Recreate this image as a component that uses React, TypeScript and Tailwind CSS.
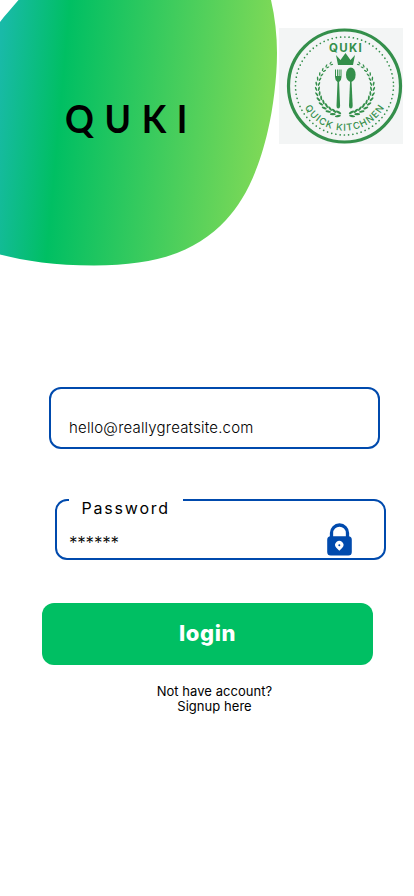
const GREEN = "#348f4b";

function Blob() {
  return (
    <svg className="absolute left-0 top-0" width="280" height="270" viewBox="0 0 280 270" aria-hidden="true">
      <defs>
        <linearGradient id="blob" gradientUnits="userSpaceOnUse" x1="0" y1="50" x2="271" y2="75">
          <stop offset="0" stopColor="#19baa8" />
          <stop offset="0.24" stopColor="#00bf63" />
          <stop offset="1" stopColor="#7ed957" />
        </linearGradient>
      </defs>
      <path
        fill="url(#blob)"
        d="M18.500 0H271C275 17 277 36 277 53C277 78 273 109 268 130C258 174 243 202 226 220C198 250 160 265.500 94 265.500C55 265.500 25 261 0 254.500V22C5 15 12 8 18.500 0Z"
      />
    </svg>
  );
}

function Laurel() {
  const leaves = Array.from({ length: 14 }, (_, i) => {
    const t = i / 13;
    const angle = 101 + t * 137;
    const a = (angle * Math.PI) / 180;
    return { angle, x: 27.5 * Math.cos(a), y: 27.5 * Math.sin(a), s: 1.05 - t * 0.5 };
  });
  return (
    <g fill={GREEN}>
      {leaves.map((l, i) => (
        <g key={i} transform={`translate(${l.x} ${l.y}) rotate(${l.angle + 90}) scale(${l.s})`}>
          <ellipse cx="1.5" cy="-1.8" rx="2.9" ry="1.1" transform="rotate(-20 1.5 -1.8)" />
          <ellipse cx="1.5" cy="1.8" rx="2.9" ry="1.1" transform="rotate(20 1.5 1.8)" />
        </g>
      ))}
    </g>
  );
}

function Logo() {
  return (
    <svg className="mt-7 mr-[11.500px] h-[116px] w-[124px] shrink-0 bg-[#f3f5f5]" viewBox="278.500 28 124 116">
      <circle cx="344" cy="86" r="56" fill="none" stroke={GREEN} strokeWidth="3.2" />
      <circle cx="344" cy="86" r="49" fill="none" stroke={GREEN} strokeWidth="1.7" strokeLinecap="round" strokeDasharray="0.01 4.266" />
      <text x="328.500" y="52.200" textLength="32.800" fill={GREEN} fontSize="11.500" fontWeight="700" fontFamily="Inter, sans-serif">QUKI</text>
      <path d="M335.500 55L340 60L345 53L350 60L354.500 55L352.500 65H337.500Z" fill={GREEN} />
      <g transform="translate(344.500 87.500)">
        <Laurel />
        <g transform="scale(-1 1)"><Laurel /></g>
      </g>
      <g fill={GREEN}>
        <path d="M334.500 69.500H335.500V76H336.500V69.500H337.400V76H338.200V69.500H339.100V76H340V69.500H341V77Q341 80.500 338.600 82L339.600 106Q339.500 108.500 337.800 108.500Q336 108.500 336 106L337 82Q334.500 80.500 334.500 77Z" />
        <ellipse cx="350.300" cy="74.700" rx="4.800" ry="7.200" />
        <path d="M349.600 80H351L352.200 106Q352 108.500 350.300 108.500Q348.600 108.500 348.500 106Z" />
      </g>
      <path id="arc" d="M303.900 107A45.800 45.800 0 0 0 384.100 107" fill="none" />
      <text fill={GREEN} fontSize="9.500" fontWeight="500" fontFamily="Inter, sans-serif">
        <textPath href="#arc" startOffset="0.500" textLength="96">QUICK KITCHNEN</textPath>
      </text>
    </svg>
  );
}

function Lock() {
  return (
    <svg className="mt-[13px] h-[33px] w-[25px]" viewBox="0 0 25 33" aria-hidden="true">
      <path d="M4.500 16V10a8 8 0 0 1 16 0V16" fill="none" stroke="#004aad" strokeWidth="3.300" />
      <rect x="0.200" y="13.200" width="24.600" height="19.300" rx="3.500" fill="#004aad" />
      <path d="M12.300 27.800L9.300 24.800A4.100 4.100 0 1 1 15.300 24.800Z" fill="white" />
      <circle cx="12.300" cy="22.300" r="1" fill="#004aad" />
    </svg>
  );
}

export default function App() {
  return (
    <main className="flex h-[896px] w-[414px] flex-col overflow-hidden bg-white font-['Inter',sans-serif] text-black">
      <header className="relative flex h-[387px] items-start justify-between">
        <Blob />
        <h1 className="relative mt-[95px] ml-[65px] origin-left scale-x-[0.94] font-['Lato',sans-serif] text-[38px] leading-[46px] font-bold tracking-[11.300px]">QUKI</h1>
        <Logo />
      </header>
      <div className="ml-[49px] flex h-[62px] w-[331px] items-end rounded-[12px] border-2 border-[#004aad] pb-[8px] pl-[18px]">
        <span className="text-[15px] leading-[22px] font-light tracking-[0.190px]">hello@reallygreatsite.com</span>
      </div>
      <fieldset className="mt-[41px] ml-[55px] flex h-[70px] w-[331px] justify-between rounded-[12px] border-2 border-[#004aad] pr-[32px] pl-[12px]">
        <legend className="h-[20px] w-[114px] px-[12.500px] text-[16px] leading-[20px] tracking-[1.800px]">
          <span className="block translate-y-2">Password</span>
        </legend>
        <span className="mt-[23px] text-[17px] leading-[20px] font-light tracking-[-0.200px]">******</span>
        <Lock />
      </fieldset>
      <button className="mt-[43px] ml-[42px] h-[62px] w-[331px] shrink-0 rounded-[12px] bg-[#00bf63] pb-[2px] text-[22px] font-extrabold tracking-[0.600px] text-white">login</button>
      <p className="mt-[19px] ml-[114.500px] w-[200px] text-center text-[13px] leading-[15px] tracking-[0.050px]">Not have account?<br />Signup here</p>
    </main>
  );
}
